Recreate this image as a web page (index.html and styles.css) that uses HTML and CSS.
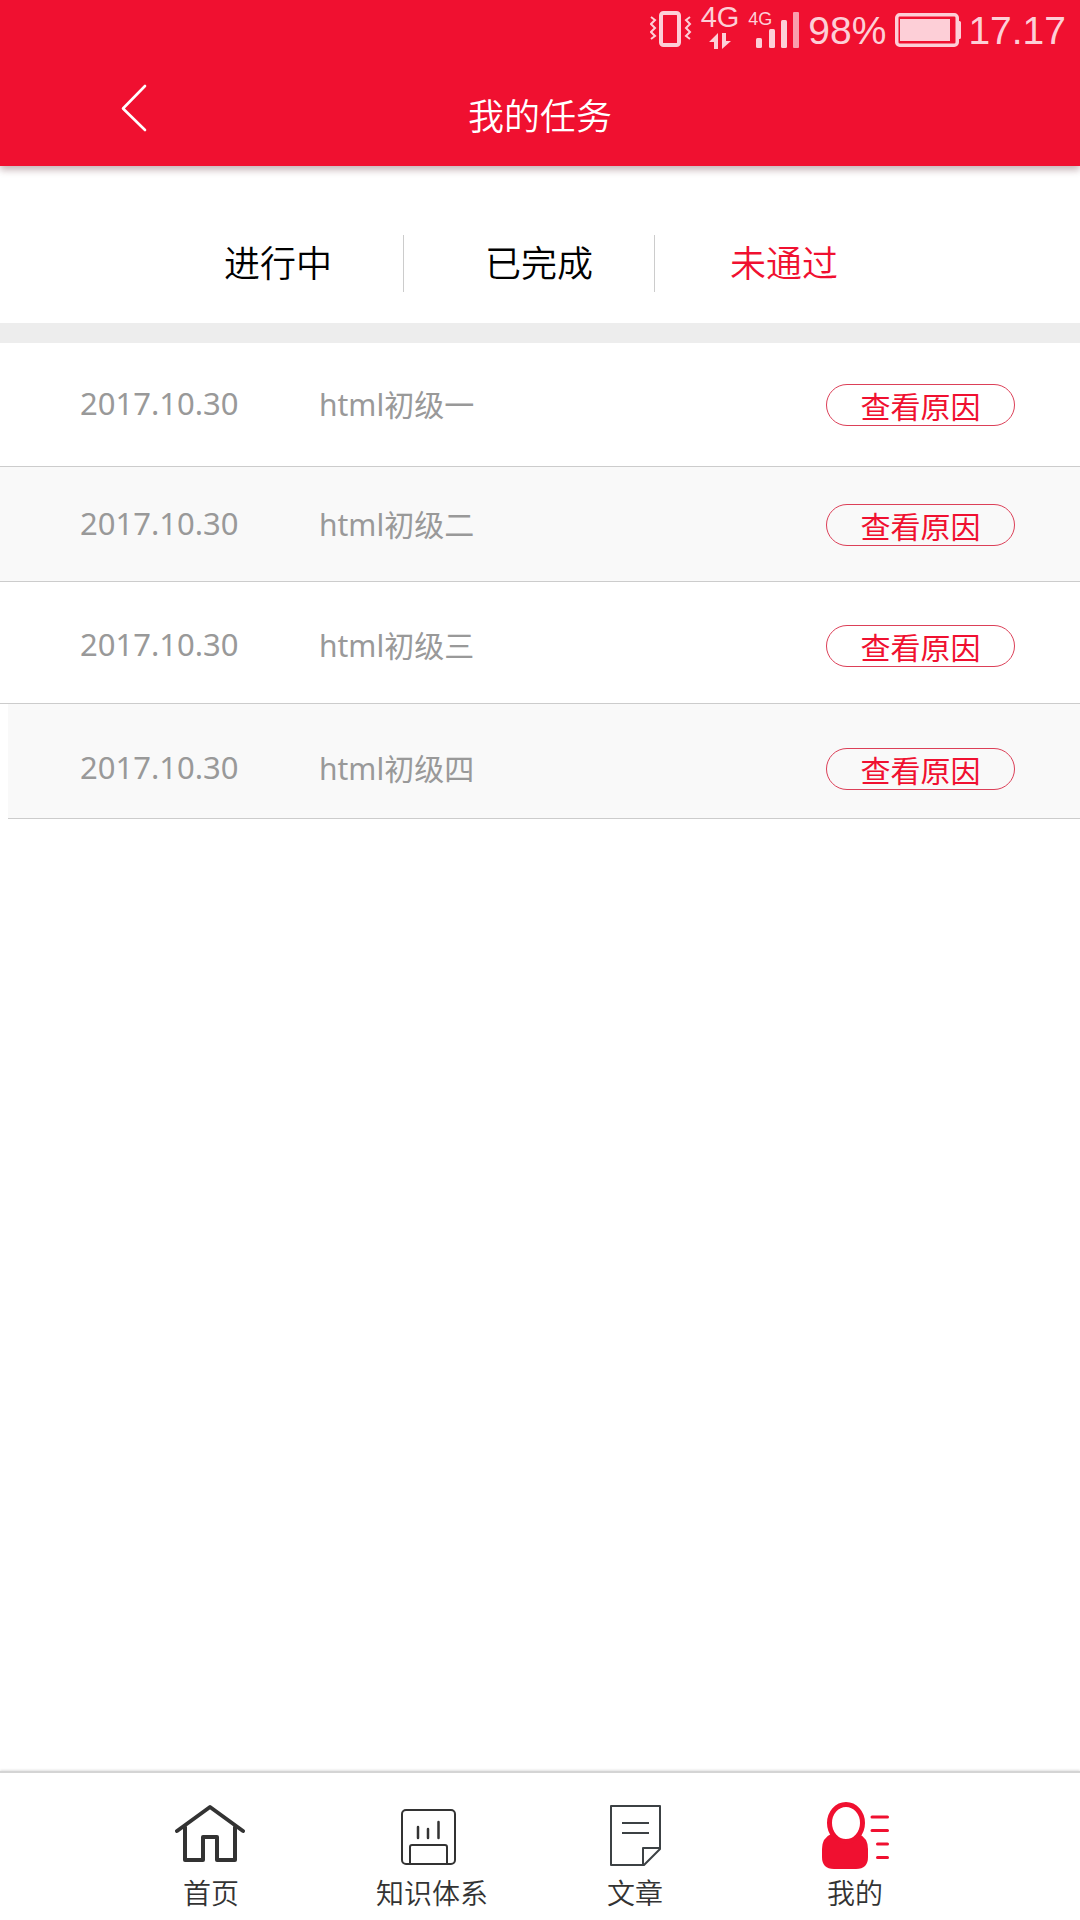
FILE: index.html
```html
<!DOCTYPE html>
<html lang="zh-CN">
<head>
  <meta charset="utf-8">
  <meta name="viewport" content="width=device-width, initial-scale=1">
  <title>我的任务</title>
  <link rel="stylesheet" href="styles.css">
</head>
<body>
  <div class="app">
    <header class="header">
      <div class="status">
        <svg class="status-vibrate" width="42" height="36" viewBox="0 0 42 36" fill="none" stroke="currentColor" aria-hidden="true">
          <rect x="11" y="2" width="18" height="32" rx="2.5" stroke-width="4"/>
          <path d="M1 6l4 3-4 4 4 4-4 4 4 4-4 3M40 6l-4 3 4 4-4 4 4 4-4 4 4 3" stroke-width="2"/>
        </svg>
        <div class="status-network">
          <span class="network-name">4G</span>
          <svg width="22" height="16" viewBox="0 0 22 16" fill="currentColor" aria-hidden="true"><path d="M9 0v16H5V9H0zM13 16V0h4v8h5z"/></svg>
        </div>
        <div class="status-signal">
          <span class="signal-name">4G</span>
          <svg width="52" height="36" viewBox="0 0 52 36" fill="currentColor" aria-hidden="true">
            <rect x="8" y="26" width="6" height="10" rx="1.5"/><rect x="21" y="17" width="6" height="19" rx="1.5"/><rect x="33" y="8" width="6" height="28" rx="1.5"/><rect x="45" y="0" width="6" height="36" rx="1" opacity=".75"/>
          </svg>
        </div>
        <span class="status-text">98%</span>
        <svg class="status-battery" width="66" height="34" viewBox="0 0 66 34" aria-hidden="true">
          <rect x="1.75" y="1.75" width="60.5" height="30.5" rx="3" fill="none" stroke="currentColor" stroke-width="3.5"/>
          <path d="M5 6h50v22H5zM63 8h1.500q1.500 0 1.500 1.500v15q0 1.500-1.500 1.500H63z" fill="currentColor"/>
        </svg>
        <span class="status-text">17.17</span>
      </div>
      <div class="titlebar">
        <button class="back" type="button" aria-label="返回">
          <svg width="26" height="48" viewBox="0 0 26 48" fill="none" stroke="currentColor" stroke-width="2.600" stroke-linecap="round" stroke-linejoin="round" aria-hidden="true"><path d="M24 2L2 24.500 24 46"/></svg>
        </button>
        <h1 class="title">我的任务</h1>
      </div>
    </header>

    <nav class="tabs">
      <a class="tab" href="#doing">进行中</a>
      <a class="tab" href="#done">已完成</a>
      <a class="tab tab-active" href="#failed">未通过</a>
    </nav>

    <ul class="tasks">
      <li class="task"><time class="task-date">2017.10.30</time><span class="task-name">html初级一</span><button class="reason" type="button">查看原因</button></li>
      <li class="task"><time class="task-date">2017.10.30</time><span class="task-name">html初级二</span><button class="reason" type="button">查看原因</button></li>
      <li class="task"><time class="task-date">2017.10.30</time><span class="task-name">html初级三</span><button class="reason" type="button">查看原因</button></li>
      <li class="task"><time class="task-date">2017.10.30</time><span class="task-name">html初级四</span><button class="reason" type="button">查看原因</button></li>
    </ul>

    <nav class="bottom">
      <a class="bottom-item" href="#home">
        <svg width="72" height="68" viewBox="0 0 72 68" fill="none" stroke="#333" stroke-width="4" stroke-linecap="round" stroke-linejoin="round" aria-hidden="true"><path d="M2 29L35 5l33 24M10 25v33h18V35h14v23h18V25"/></svg>
        <span>首页</span>
      </a>
      <a class="bottom-item" href="#knowledge">
        <svg width="62" height="68" viewBox="0 0 62 68" fill="none" stroke="#333" stroke-width="2" aria-hidden="true"><rect x="1" y="8" width="53" height="54" rx="4"/><path d="M9 62V45q0-2 2-2h33q2 0 2 2v17"/><path d="M17 25v11M27 27v9M37.500 20v16" stroke-width="2.500" stroke-linecap="round"/></svg>
        <span>知识体系</span>
      </a>
      <a class="bottom-item" href="#articles">
        <svg width="52" height="68" viewBox="0 0 52 68" fill="none" stroke="#3c4144" stroke-width="2" stroke-linejoin="round" aria-hidden="true"><path d="M2 4h49v43L35 63H2zM51 46H34v17"/><path d="M13 21h27M13 31h27"/></svg>
        <span>文章</span>
      </a>
      <a class="bottom-item" href="#mine">
        <svg width="67" height="68" viewBox="0 0 67 68" aria-hidden="true"><path d="M9 32Q0 36 0 47v8q0 12 12 12h22q12 0 12-12v-8q0-11-9-15z" fill="#f01030"/><ellipse cx="24" cy="21" rx="16.500" ry="18.500" fill="#fff" stroke="#f01030" stroke-width="5"/><path d="M50 15h15.500M50 28.500h15.500M55.500 42h10M55.500 55.500h10" fill="none" stroke="#f01030" stroke-width="3" stroke-linecap="round"/></svg>
        <span>我的</span>
      </a>
    </nav>
  </div>
</body>
</html>
```
FILE: styles.css
```css
* {
  box-sizing: border-box;
}

body {
  margin: 0;
  background: #fff;
  color: #000;
  font-family: "Noto Sans CJK SC", sans-serif;
  font-weight: 350;
}

a {
  color: inherit;
  text-decoration: none;
}

button {
  margin: 0;
  padding: 0;
  border: 0;
  background: none;
  color: inherit;
  font: inherit;
  cursor: pointer;
}

svg {
  display: block;
  flex: none;
}

.app {
  display: flex;
  flex-direction: column;
  min-height: 100vh;
}

.header {
  background: #f01030;
  color: #fff;
  box-shadow: 0 4px 7px rgba(70, 10, 20, 0.3);
}

/* Status bar */
.status {
  display: flex;
  justify-content: flex-end;
  height: 60px;
  padding: 0 14px;
  color: #fdcfd7;
  font-family: "Liberation Sans", Arial, sans-serif;
  font-weight: 400;
}

.status-vibrate {
  margin-top: 11px;
}

.status-network {
  display: flex;
  flex-direction: column;
  align-items: center;
  gap: 2px;
  padding: 3px 9px 0;
}

.network-name {
  font-size: 29px;
  line-height: 28px;
}

.status-signal {
  display: grid;
  align-content: start;
  justify-items: start;
  padding-top: 12px;
  margin-right: 8px;
}

.status-signal > * {
  grid-area: 1 / 1;
}

.signal-name {
  font-size: 18px;
  line-height: 14px;
}

.status-text {
  font-size: 39px;
  line-height: 62px;
}

.status-battery {
  margin: 13px 7px 0 9px;
}

/* Title bar */
.titlebar {
  display: grid;
  grid-template-columns: 1fr auto 1fr;
  height: 106px;
}

.back {
  justify-self: start;
  align-self: start;
  margin: 24px 0 0 121px;
}

.title {
  margin: 0;
  padding-top: 28px;
  font-size: 36px;
  line-height: 52px;
  font-weight: 350;
}

/* Filter tabs */
.tabs {
  display: grid;
  grid-template-columns: 404fr 251fr 425fr;
  padding: 69px 0 31px;
  border-bottom: 20px solid #ededed;
}

.tab {
  padding: 0 0 5px 81px;
  border-right: 1px solid #ccc;
  font-size: 36px;
  line-height: 52px;
  white-space: nowrap;
}

.tab:first-child {
  padding-right: 71px;
  text-align: right;
}

.tab:last-child {
  padding-left: 75px;
  border-right: 0;
}

.tab-active {
  color: #f01030;
}

/* Task list */
.tasks {
  margin: 0;
  padding: 0;
  list-style: none;
}

.task {
  display: flex;
  align-items: center;
  height: 124px;
  padding: 1px 65px 0 80px;
  border-bottom: 1px solid #ccc;
  color: #999;
  font-family: "Noto Sans", "Noto Sans CJK SC", sans-serif;
  font-size: 30px;
  font-weight: 400;
}

.task:nth-child(even) {
  height: 115px;
  background: #f9f9f9;
}

.task:nth-child(3) {
  height: 122px;
  padding-top: 6px;
}

.task:nth-child(4) {
  margin-left: 8px;
  padding-top: 15px;
  padding-left: 72px;
}

.task-date,
.task-name {
  padding-bottom: 4px;
}

.task-date {
  flex: none;
  width: 239px;
  font-size: 31px;
}

.task-name {
  flex: 1;
}

.reason {
  width: 189px;
  height: 42px;
  border: 1px solid #dc4058;
  border-radius: 21px;
  color: #f01030;
  font-family: "Noto Sans CJK SC", sans-serif;
  line-height: 40px;
}

/* Bottom navigation */
.bottom {
  display: grid;
  grid-template-columns: 222fr 220fr 186fr 254fr;
  margin-top: auto;
  padding: 29px 98px 8px 100px;
  border-top: 2px solid #d4d4d4;
  box-shadow: 0 -1px 2px rgba(0, 0, 0, 0.12);
  color: #333;
}

.bottom-item {
  display: flex;
  flex-direction: column;
  align-items: center;
  gap: 2px;
  font-size: 28px;
  line-height: 40px;
}
```
